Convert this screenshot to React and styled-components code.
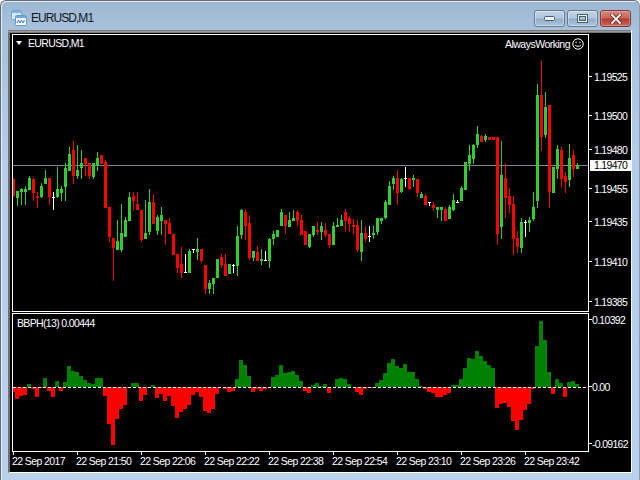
import styled, { createGlobalStyle } from "styled-components";

const GlobalStyle = createGlobalStyle`
  html, body {
    margin: 0;
    padding: 0;
    background: #fff;
  }
  #root {
    width: 640px;
    height: 480px;
    overflow: hidden;
  }
`;

// kind, wick top, body top, body bottom, wick bottom (page y). x = 13 + 4 * index
const candles = [
  ["r",178,179,196,197],["g",191,191,198,206],["g",188,189,192,205],["g",186,189,192,205],["g",176,178,190,190],
  ["r",178,179,193,201],["r",192,196,198,208],["g",183,186,197,198],["g",170,178,184,184],["r",178,178,197,205],
  ["w",192,197,198,210],["g",167,189,197,198],["g",186,189,193,201],["g",163,168,187,201],["g",147,154,171,171],
  ["r",141,150,176,184],["g",145,170,176,179],["g",150,163,168,179],["r",158,158,164,176],["r",163,163,176,179],
  ["g",163,163,177,179],["g",152,158,165,171],["r",155,155,164,164],["r",160,162,208,208],["r",207,207,237,242],
  ["r",238,238,248,281],["g",220,241,250,250],["g",204,233,250,252],["g",217,220,237,237],["g",192,197,221,221],
  ["r",192,196,201,210],["r",192,204,210,210],["r",210,210,240,242],["g",200,233,239,239],["g",189,202,232,235],
  ["r",194,202,224,224],["g",215,217,231,235],["g",207,215,221,235],["r",220,220,224,245],["r",218,223,234,234],
  ["r",234,234,255,255],["r",254,254,268,273],["r",247,264,273,278],["w",254,272,273,273],["g",249,251,273,273],
  ["w",249,249,250,253],["g",238,249,252,260],["r",249,249,261,263],["r",265,265,289,294],["g",280,283,289,294],
  ["g",278,278,284,294],["g",259,259,278,278],["r",254,257,265,268],["r",254,264,276,276],["g",264,264,274,274],
  ["w",264,265,266,273],["g",226,236,266,276],["g",209,210,235,239],["r",209,212,226,240],["r",215,223,258,260],
  ["g",251,251,258,261],["r",246,252,261,261],["g",249,259,261,265],["w",251,260,261,261],["g",238,239,261,268],
  ["g",231,234,239,245],["g",230,230,237,237],["g",209,212,226,226],["r",215,215,226,234],["g",212,220,227,227],
  ["g",210,218,221,221],["r",210,212,221,226],["r",215,220,235,235],["r",231,231,245,245],["g",234,234,247,248],
  ["g",226,226,235,237],["r",222,230,232,235],["g",222,226,232,240],["r",223,230,235,237],["r",234,234,245,248],
  ["g",222,226,245,245],["g",218,225,227,227],["g",215,220,226,226],["r",209,212,221,231],["r",216,218,224,232],
  ["r",219,225,227,234],["r",220,225,250,252],["g",220,233,252,261],["r",226,233,239,242],["w",226,236,237,242],
  ["g",226,233,235,239],["g",218,218,232,235],["g",218,218,221,224],["g",200,202,218,219],["g",181,186,205,205],
  ["g",176,178,184,190],["r",170,178,193,205],["g",178,179,192,193],["w",167,178,179,187],["r",178,178,189,190],
  ["g",175,178,180,187],["r",179,179,193,197],["g",192,194,198,198],["r",194,196,205,205],["w",202,202,203,206],
  ["r",202,205,208,211],["g",207,207,210,218],["g",207,207,210,221],["r",207,209,221,221],["g",205,207,219,219],
  ["g",194,200,210,211],["w",200,202,203,203],["g",186,188,201,201],["g",162,162,190,190],["g",145,155,164,171],
  ["g",144,145,159,164],["g",126,134,145,148],["r",135,136,142,142],["g",134,136,140,142],["r",137,137,140,140],
  ["r",137,137,140,140],["r",137,137,234,245],["g",141,175,227,239],["r",163,178,198,218],["r",188,196,205,213],
  ["r",196,204,239,255],["r",231,238,247,253],["g",218,222,248,253],["w",220,222,223,237],["g",217,220,223,232],
  ["g",192,207,219,221],["g",84,95,201,208],["r",61,95,137,151],["g",92,107,135,138],["r",105,105,192,208],
  ["g",167,167,193,193],["g",145,149,169,179],["r",147,150,179,187],["r",172,176,182,193],["g",144,158,180,187],
  ["r",150,155,169,177],["g",163,165,169,169],
];

// histogram heights in pixels around the zero line, same index as the candles
const bars = [
  -5,-12,-9,-8,3,-2,-10,-1,9,-4,-10,6,-4,5,21,16,15,11,7,4,3,9,9,-9,-37,-58,-32,-22,-18,-1,4,4,-14,-8,-1,2,
  -11,-7,-14,-9,-19,-31,-25,-22,-18,-8,-5,-10,-24,-26,-22,-7,0,-2,-5,-4,8,27,22,11,-5,-2,-4,-2,0,10,12,22,14,15,16,12,
  6,-4,-6,2,4,1,3,-6,0,8,9,8,3,0,-5,-8,-2,-1,-1,4,7,14,24,28,21,19,23,15,15,8,1,-2,-5,-6,-10,-10,-8,-6,2,2,
  8,19,29,28,36,31,26,22,19,-21,-17,-16,-20,-34,-43,-33,-23,-17,-2,41,66,47,15,-7,8,4,-10,5,6,3,
];

const candleColors = { g: "#32cd32", r: "#ff0000", w: "#ffffff" };

const prices = [
  { y: 77, text: "1.19525" },
  { y: 116, text: "1.19500" },
  { y: 150, text: "1.19480" },
  { y: 189, text: "1.19455" },
  { y: 222, text: "1.19435" },
  { y: 262, text: "1.19410" },
  { y: 302, text: "1.19385" },
];

const levels = [
  { y: 320, text: "0.10392" },
  { y: 387, text: "0.00" },
  { y: 444, text: "-0.09162" },
];

const times = [
  "22 Sep 2017", "22 Sep 21:50", "22 Sep 22:06", "22 Sep 22:22", "22 Sep 22:38",
  "22 Sep 22:54", "22 Sep 23:10", "22 Sep 23:26", "22 Sep 23:42",
];

const Window = styled.div`
  width: 640px;
  height: 480px;
  box-sizing: border-box;
  display: flex;
  flex-direction: column;
  border: 1px solid #5f6b78;
  border-bottom: 0;
  border-right-color: #8d9aa8;
  border-radius: 6px 6px 0 0;
  box-shadow: inset 1px 1px 0 rgba(255, 255, 255, 0.7);
  background: linear-gradient(180deg, #9db7d2 0, #a9c2dc 30px, #b5cde6 160px, #b9d1ea 100%);
  font-family: "Liberation Sans", Arial, sans-serif;
`;

const TitleBar = styled.div`
  height: 29px;
  box-sizing: border-box;
  display: flex;
  align-items: center;
  padding: 5px 1px 0 10px;
  flex-shrink: 0;
`;

const TitleText = styled.span`
  margin-left: 4px;
  font-size: 12px;
  letter-spacing: -0.95px;
  color: #10181f;
  flex: 1;
`;

const WindowButtons = styled.div`
  display: flex;
  gap: 2px;
  margin-right: 7px;
  align-self: flex-start;
  margin-top: 4px;
`;

const WindowButton = styled.div`
  width: 31px;
  height: 17px;
  box-sizing: border-box;
  display: flex;
  align-items: center;
  justify-content: center;
  border: 1px solid ${(p) => (p.$close ? "#7a3a36" : "#66788c")};
  border-radius: 3px;
  box-shadow: inset 0 0 0 1px rgba(255, 255, 255, ${(p) => (p.$close ? 0.25 : 0.4)});
  background: ${(p) =>
    p.$close
      ? "linear-gradient(180deg, #d58a7f 0, #c9645a 45%, #b23a30 55%, #c76a5e 100%)"
      : "linear-gradient(180deg, #c3d5e8 0, #b0c6dd 45%, #91aecb 55%, #adc4da 100%)"};
`;

const Client = styled.div`
  flex: 1;
  margin: 0 7px 7px 7px;
  display: flex;
  flex-direction: column;
  background: #000;
  box-sizing: border-box;
  padding: 4px 0 0 2px;
  border-left: 2px solid #6f6f6f;
  border-right: 1px solid #fff;
  border-bottom: 1px solid #fff;
  position: relative;
  &::before {
    content: "";
    position: absolute;
    left: -2px;
    right: 0;
    top: 0;
    height: 3px;
    background: linear-gradient(180deg, #666 0, #9a9a9a 50%, #666 100%);
  }
`;

const ChartRow = styled.div`
  display: flex;
  margin-bottom: ${(p) => p.$gap || 0}px;
`;

const Pane = styled.div`
  position: relative;
  width: 577px;
  height: ${(p) => p.$height}px;
  box-sizing: border-box;
  border: 1px solid #fff;
  flex-shrink: 0;
  overflow: hidden;
`;

const PaneSvg = styled.svg`
  display: block;
  shape-rendering: crispEdges;
`;

const Legend = styled.div`
  position: absolute;
  left: ${(p) => p.$left}px;
  top: ${(p) => p.$top}px;
  display: flex;
  align-items: center;
  gap: 6px;
  color: #fff;
  font-size: 10.5px;
  letter-spacing: -0.65px;
  line-height: 12px;
  white-space: nowrap;
`;

const Signature = styled(Legend)`
  left: auto;
  right: 4px;
  gap: 2px;
  letter-spacing: -0.5px;
`;

const LegendArrow = styled.i`
  width: 0;
  height: 0;
  border-left: 3.5px solid transparent;
  border-right: 3.5px solid transparent;
  border-top: 4px solid #fff;
`;

const Axis = styled.div`
  position: relative;
  flex: 1;
`;

const AxisLabel = styled.div`
  position: absolute;
  left: 0;
  right: 0;
  height: 12px;
  margin-top: -6px;
  padding-left: ${(p) => p.$pad || 5}px;
  color: #fff;
  font-size: 10.5px;
  letter-spacing: -0.7px;
  line-height: 12px;
  &::before {
    content: "";
    position: absolute;
    left: 0;
    top: 5px;
    width: 3px;
    height: 1px;
    background: #fff;
  }
`;

const BidLabel = styled.div`
  position: absolute;
  left: 1px;
  right: 0;
  height: 11px;
  margin-top: -5px;
  padding-left: 4px;
  background: #fff;
  color: #000;
  font-size: 10.5px;
  letter-spacing: -0.7px;
  line-height: 11px;
`;

const TimeAxis = styled.div`
  display: flex;
  margin-left: 1px;
`;

const TimeCell = styled.div`
  width: 64px;
  flex-shrink: 0;
  position: relative;
  padding-top: 3px;
  color: #fff;
  font-size: 10.5px;
  letter-spacing: -0.6px;
  line-height: 12px;
  white-space: nowrap;
  text-indent: -1px;
  &::before {
    content: "";
    position: absolute;
    left: 0;
    top: 0;
    width: 1px;
    height: 3px;
    background: #fff;
  }
`;

const AppIcon = () => (
  <svg width="16" height="16" viewBox="0 0 16 16">
    <rect x="0.5" y="0.5" width="10" height="9" rx="1" fill="#d8e8f8" stroke="#6ea4dc" />
    <rect x="1" y="1" width="9" height="2" fill="#7fb3e8" />
    <rect x="4.5" y="5.5" width="11" height="10" rx="1" fill="#f2f7fc" stroke="#5f9ad8" />
    <rect x="5" y="6" width="10" height="2" fill="#6fa8e2" />
    <path d="M6 13l1.5-3 1.5 3 1.5-3 1.5 3 1.5-3" fill="none" stroke="#4a7fb8" strokeWidth="1" />
  </svg>
);

const MinimizeIcon = () => (
  <svg width="11" height="5" viewBox="0 0 11 5">
    <rect x="0.5" y="0.5" width="10" height="4" rx="1" fill="#eef3f8" stroke="#4d5d6e" />
  </svg>
);

const MaximizeIcon = () => (
  <svg width="11" height="9" viewBox="0 0 11 9">
    <rect x="1" y="1" width="9" height="7" fill="none" stroke="#eef3f8" strokeWidth="2" />
    <rect x="0.5" y="0.5" width="10" height="8" fill="none" stroke="#4d5d6e" />
    <rect x="2.5" y="2.5" width="6" height="4" fill="none" stroke="#4d5d6e" />
  </svg>
);

const CloseIcon = () => (
  <svg width="12" height="10" viewBox="0 0 12 10">
    <path d="M2 1l8 8M10 1l-8 8" stroke="#6b2a26" strokeWidth="3.6" strokeLinecap="square" />
    <path d="M2 1l8 8M10 1l-8 8" stroke="#f6eeee" strokeWidth="2" strokeLinecap="square" />
  </svg>
);

const Smiley = () => (
  <svg width="12" height="12" viewBox="0 0 12 12" fill="none" stroke="#fff">
    <circle cx="6" cy="6" r="5.2" />
    <path d="M3.2 7.2c.8 1.5 4.8 1.5 5.6 0" />
    <rect x="3.6" y="3.6" width="1" height="1.6" fill="#fff" stroke="none" />
    <rect x="7.4" y="3.6" width="1" height="1.6" fill="#fff" stroke="none" />
  </svg>
);

const PriceChart = () => (
  <PaneSvg width="575" height="276" viewBox="13 35 575 276">
    <rect x="13" y="165" width="575" height="1" fill="#778899" />
    {candles.map(([kind, top, bodyTop, bodyBottom, bottom], i) => {
      const x = 13 + i * 4;
      const color = candleColors[kind];
      return (
        <g key={i} fill={color}>
          <rect x={x} y={top} width="1" height={bottom - top} />
          <rect x={x - 1} y={bodyTop} width="3" height={bodyBottom - bodyTop} />
        </g>
      );
    })}
  </PaneSvg>
);

const HistogramChart = () => (
  <PaneSvg width="575" height="137" viewBox="13 314 575 137">
    {bars.map((v, i) => (
      <rect
        key={i}
        x={11 + i * 4}
        y={v > 0 ? 387 - v : 387}
        width="4"
        height={Math.abs(v)}
        fill={v > 0 ? "#008000" : "#ff0000"}
      />
    ))}
    <line x1="13" y1="387.5" x2="588" y2="387.5" stroke="#fff" strokeDasharray="3 2" />
  </PaneSvg>
);

export default function App() {
  return (
    <>
      <GlobalStyle />
      <Window>
        <TitleBar>
          <AppIcon />
          <TitleText>EURUSD,M1</TitleText>
          <WindowButtons>
            <WindowButton><MinimizeIcon /></WindowButton>
            <WindowButton><MaximizeIcon /></WindowButton>
            <WindowButton $close><CloseIcon /></WindowButton>
          </WindowButtons>
        </TitleBar>
        <Client>
          <ChartRow $gap={1}>
            <Pane $height={278}>
              <PriceChart />
              <Legend $left={3} $top={2}>
                <LegendArrow />
                EURUSD,M1
              </Legend>
              <Signature $top={3}>
                AlwaysWorking
                <Smiley />
              </Signature>
            </Pane>
            <Axis>
              {prices.map((p) => (
                <AxisLabel key={p.text} style={{ top: p.y - 34 }}>{p.text}</AxisLabel>
              ))}
              <BidLabel style={{ top: 165 - 34 }}>1.19470</BidLabel>
            </Axis>
          </ChartRow>
          <ChartRow>
            <Pane $height={139}>
              <HistogramChart />
              <Legend $left={4} $top={3}>BBPH(13) 0.00444</Legend>
            </Pane>
            <Axis>
              {levels.map((l) => (
                <AxisLabel key={l.text} $pad={3} style={{ top: l.y - 313 }}>{l.text}</AxisLabel>
              ))}
            </Axis>
          </ChartRow>
          <TimeAxis>
            {times.map((t) => (
              <TimeCell key={t}>{t}</TimeCell>
            ))}
          </TimeAxis>
        </Client>
      </Window>
    </>
  );
}
